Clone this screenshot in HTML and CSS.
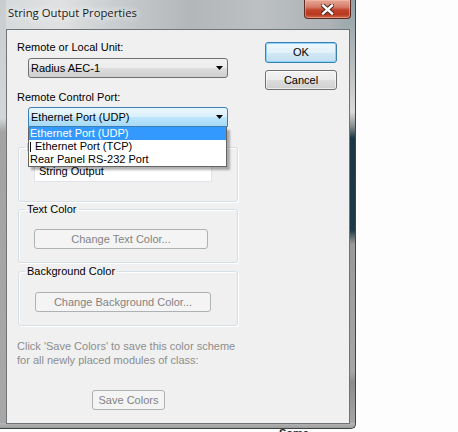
FILE: index.html
```html
<!DOCTYPE html>
<html lang="en">
<head>
  <meta charset="UTF-8">
  <title>String Output Properties</title>
  <link rel="stylesheet" href="styles.css">
</head>
<body>
  <div class="window">
    <div class="titlebar">
      <span class="title">String Output Properties</span>
      <button class="close" title="Close">
        <svg width="13" height="11" viewBox="0 0 13 11">
          <path d="M2 1.5 L11 9.5 M11 1.5 L2 9.5" stroke="#4b2621" stroke-width="4.4" stroke-linecap="square" fill="none"/>
          <path d="M2 1.5 L11 9.5 M11 1.5 L2 9.5" stroke="#fff" stroke-width="2.4" stroke-linecap="square" fill="none"/>
        </svg>
      </button>
    </div>

    <div class="client">
      <div class="main">
        <div class="label">Remote or Local Unit:</div>
        <div class="combo unit">
          <span>Radius AEC-1</span>
          <svg class="arrow" width="7" height="4" viewBox="0 0 7 4"><polygon points="0,0 7,0 3.5,4" fill="#000"/></svg>
        </div>

        <div class="label port-label">Remote Control Port:</div>
        <div class="combo focus">
          <span>Ethernet Port (UDP)</span>
          <svg class="arrow" width="7" height="4" viewBox="0 0 7 4"><polygon points="0,0 7,0 3.5,4" fill="#000"/></svg>
          <ul class="droplist">
            <li class="selected">Ethernet Port (UDP)</li>
            <li><span class="caret"></span>Ethernet Port (TCP)</li>
            <li>Rear Panel RS-232 Port</li>
          </ul>
        </div>

        <fieldset class="group name-group">
          <legend>Name</legend>
          <div class="field">String Output</div>
        </fieldset>

        <fieldset class="group text-group">
          <legend>Text Color</legend>
          <button class="btn text-btn" disabled>Change Text Color...</button>
        </fieldset>

        <fieldset class="group bg-group">
          <legend>Background Color</legend>
          <button class="btn bg-btn" disabled>Change Background Color...</button>
        </fieldset>

        <p class="note">Click 'Save Colors' to save this color scheme<br>for all newly placed modules of class:</p>

        <button class="btn save-btn" disabled>Save Colors</button>
      </div>

      <div class="side">
        <button class="btn default">OK</button>
        <button class="btn cancel">Cancel</button>
      </div>
    </div>
  </div>
  <div class="desk-label">Some</div>
</body>
</html>
```

FILE: styles.css
```css
body {
  margin: 0;
  height: 432px;
  overflow: hidden;
  background: #fdfdfd;
  font-family: "Liberation Sans", Arial, sans-serif;
  font-size: 11px;
  color: #000;
}

/* window frame */
.window {
  width: 356px;
  height: 429px;
  box-sizing: border-box;
  padding: 0 5px 4px 6px;
  border-right: 1px solid #3d4549;
  border-bottom: 1px solid #3d4549;
  border-bottom-right-radius: 5px;
  display: flex;
  flex-direction: column;
  background:
    linear-gradient(#b8b8b8, #9c9c9c) left bottom / 100% 5px no-repeat,
    linear-gradient(to bottom, #8fa1a6 0, #b5babc 60px, #dadada 112px, #8a8f91 126px, #1c3743 138px, #1e3947 230px, #9a9a9a 244px, #a6a6a6 372px, #8c8c8c 382px, #a9a9a9 100%) right top / 6px 100% no-repeat,
    linear-gradient(to bottom, #c9cdd0 0, #d3d6d8 118px, #a3a3a3 132px, #a8a8a8 100%) left top / 6px 100% no-repeat,
    linear-gradient(to right, #d6d9db 0, #dfe1e2 60px, #c4c8ca 130px, #b3b7b9 190px, #bcc0c2 260px, #acb2b5 330px, #97a6ab 100%);
}

.titlebar {
  height: 29px;
  display: flex;
  align-items: flex-start;
}

.title {
  margin: 5px 0 0 2px;
  font-family: "Open Sans", "Liberation Sans", sans-serif;
  font-size: 11.3px;
  line-height: 15px;
  color: #1b1b1b;
  text-shadow: 0 0 6px rgba(255, 255, 255, 0.95), 0 0 10px #fff;
}

.close {
  margin: 0 -1px 0 auto;
  width: 47px;
  height: 19px;
  padding: 0;
  border: 1px solid #5b2a22;
  border-top: 0;
  border-radius: 0 0 4px 4px;
  background: linear-gradient(#e6a897 0, #d57a67 40%, #c2432c 55%, #b8381f 80%, #cf6a4c 100%);
  box-shadow: inset 0 0 0 1px rgba(255, 200, 185, 0.45);
  display: flex;
  align-items: center;
  justify-content: center;
}

.close svg {
  display: block;
}

/* dialog body */
.client {
  flex: 1;
  display: grid;
  grid-template-columns: 231px 1fr;
  border: 1px solid #6e7478;
  background: #f0f0f0;
}

.main {
  padding: 11px 0 0 10px;
}

.label {
  line-height: 13px;
}

.port-label {
  margin-top: 13px;
}

.combo {
  position: relative;
  width: 200px;
  height: 20px;
  box-sizing: border-box;
  margin-left: 11px;
  padding: 0 4px 0 2px;
  border: 1px solid #707070;
  border-radius: 3px;
  background: linear-gradient(#f2f2f2 0, #ebebeb 50%, #dddddd 51%, #cfcfcf 100%);
  display: flex;
  align-items: center;
  justify-content: space-between;
  line-height: 13px;
}

.combo.unit {
  margin-top: 4px;
}

.combo.focus {
  margin-top: 3px;
  border-color: #3c7fb1;
  border-radius: 3px 3px 0 0;
  background: linear-gradient(#eaf6fd 0, #d9f0fc 50%, #bee6fd 51%, #a7d9f5 100%);
}

.arrow {
  display: block;
}

.droplist {
  position: absolute;
  top: 19px;
  left: -1px;
  width: 199px;
  box-sizing: border-box;
  margin: 0;
  padding: 0;
  list-style: none;
  background: #fff;
  border: 1px solid #646464;
  border-top: 0;
  box-shadow: 3px 3px 2px rgba(0, 0, 0, 0.3);
  z-index: 2;
}

.droplist li {
  height: 13px;
  line-height: 13px;
  padding-left: 1px;
  display: flex;
  align-items: center;
  white-space: nowrap;
}

.droplist li.selected {
  background: #3399ff;
  color: #fff;
}

.caret {
  width: 1px;
  height: 10px;
  margin-right: 4px;
  background: #111;
}

/* group boxes */
.group {
  width: 220px;
  box-sizing: border-box;
  margin: 0 0 0 1px;
  padding: 0;
  border: 1px solid #d5dfe5;
  border-radius: 3px;
  box-shadow: inset 1px 1px 0 #fff, 1px 1px 0 #fff;
}

.group legend {
  margin-left: 6px;
  padding: 0 2px;
  line-height: 13px;
}

.name-group {
  height: 61px;
  margin-top: 14px;
}

.text-group {
  height: 60px;
  margin-top: 1px;
}

.bg-group {
  height: 61px;
  margin-top: 2px;
}

.field {
  width: 178px;
  height: 21px;
  box-sizing: border-box;
  margin: 7px 0 0 15px;
  padding: 3px 0 0 4px;
  line-height: 13px;
  background: #fff;
  border: 1px solid #e2e3ea;
  border-top-color: #abadb3;
  border-radius: 2px;
}

/* buttons */
.btn {
  display: block;
  height: 20px;
  box-sizing: border-box;
  padding: 0;
  font-family: inherit;
  font-size: 11px;
  line-height: 13px;
  color: #000;
  border: 1px solid #707070;
  border-radius: 3px;
  background: linear-gradient(#f2f2f2 0, #ebebeb 50%, #dddddd 51%, #cfcfcf 100%);
  box-shadow: inset 0 0 0 1px rgba(255, 255, 255, 0.6);
}

.btn:disabled {
  color: #838383;
  border-color: #adb2b5;
  background: #f4f4f4;
  box-shadow: none;
}

.text-btn {
  width: 174px;
  margin: 13px 0 0 15px;
}

.bg-btn {
  width: 176px;
  margin: 14px 0 0 16px;
}

.note {
  margin: 13px 0 0;
  line-height: 14px;
  color: #8d8d8d;
}

.save-btn {
  width: 73px;
  margin: 23px 0 0 75px;
}

.side {
  padding: 12px 0 0 27px;
}

.side .btn {
  width: 72px;
}

.btn.default {
  height: 21px;
  border-color: #3c7fb1;
  box-shadow: inset 0 0 0 1px #8ad5f7;
  background: linear-gradient(#eef7fc 0, #e3f1fa 50%, #d2e8f6 51%, #c4def0 100%);
}

.btn.cancel {
  margin-top: 7px;
}

/* desktop icon caption peeking under the window */
.desk-label {
  margin: -1px 0 0 279px;
  line-height: 11px;
  font-weight: bold;
  color: #2a2a2a;
}
```
